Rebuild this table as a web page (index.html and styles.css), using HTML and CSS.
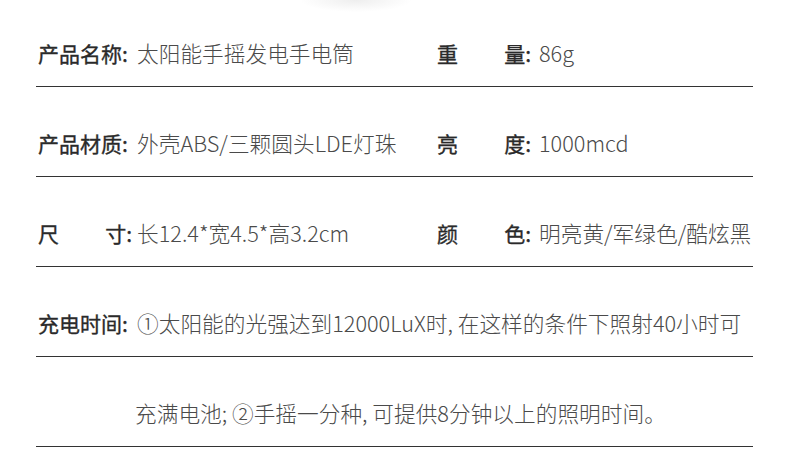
FILE: index.html
```html
<!DOCTYPE html>
<html lang="zh-CN">
<head>
  <meta charset="UTF-8">
  <title>产品参数 - 太阳能手摇发电手电筒</title>
  <link rel="stylesheet" href="styles.css">
</head>
<body>
  <div class="spec">
    <div class="fila">
      <div class="item">
        <span class="label"><span>产品名称:</span></span>
        <span class="valor">太阳能手摇发电手电筒</span>
      </div>
      <div class="item">
        <span class="label"><span>重</span><span>量:</span></span>
        <span class="valor">86g</span>
      </div>
    </div>
    <div class="fila">
      <div class="item">
        <span class="label"><span>产品材质:</span></span>
        <span class="valor">外壳ABS/三颗圆头LDE灯珠</span>
      </div>
      <div class="item">
        <span class="label"><span>亮</span><span>度:</span></span>
        <span class="valor">1000mcd</span>
      </div>
    </div>
    <div class="fila">
      <div class="item">
        <span class="label"><span>尺</span><span>寸:</span></span>
        <span class="valor">长12.4*宽4.5*高3.2cm</span>
      </div>
      <div class="item">
        <span class="label"><span>颜</span><span>色:</span></span>
        <span class="valor">明亮黄/军绿色/酷炫黑</span>
      </div>
    </div>
    <div class="fila">
      <div class="item largo">
        <span class="label"><span>充电时间:</span></span>
        <span class="valor">①太阳能的光强达到12000LuX时, 在这样的条件下照射40小时可</span>
      </div>
    </div>
    <div class="fila">
      <div class="item largo sigue">
        <span class="valor">充满电池; ②手摇一分种, 可提供8分钟以上的照明时间。</span>
      </div>
    </div>
  </div>
</body>
</html>
```

FILE: styles.css
```css
:root {
  --texto: #2a2a2a;
  --valor: #4a4a4a;
  --linea: #333;
}
body {
  margin: 0;
  background: #fff radial-gradient(ellipse 56px 12px at 356px 0, #eeeeee, rgba(255,255,255,0) 100%) no-repeat;
  font-family: "Noto Sans CJK SC", "Noto Sans", sans-serif;
  color: var(--texto);
  font-size: 21px;
}
.spec {
  margin: 0 37px 0 36px;
}
.fila {
  display: flex;
  padding: 41px 0 18px;
  line-height: 30px;
  border-bottom: 1px solid var(--linea);
}
.fila:first-child {
  padding-top: 38px;
}
.item {
  display: flex;
  width: 400px;
  padding-left: 2px;
  box-sizing: border-box;
}
.item + .item {
  flex: 1;
  padding-left: 1px;
}
.item + .item .label {
  margin-right: 8px;
}
.item.largo {
  width: auto;
  flex: 1;
}
.item.sigue {
  padding-left: 99px;
}
.label {
  display: flex;
  justify-content: space-between;
  flex: none;
  width: 94px;
  margin-right: 5px;
  -webkit-text-stroke: 0.35px var(--texto);
}
.valor {
  font-size: 21.7px;
  font-weight: 300;
  color: var(--valor);
  white-space: nowrap;
}
```
